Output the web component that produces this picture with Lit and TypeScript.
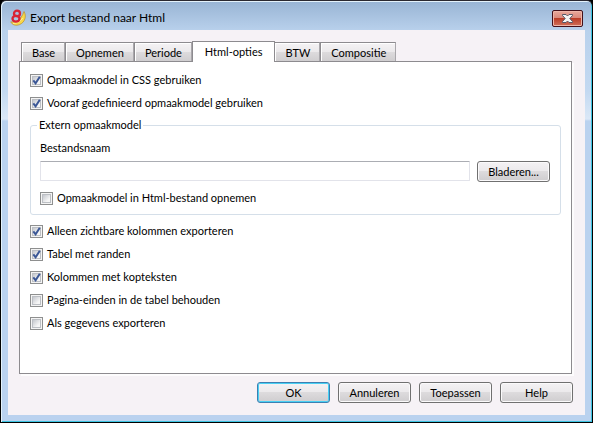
import { LitElement, html, css, svg, nothing } from "lit";
import { customElement, property, state } from "lit/decorators.js";
import { classMap } from "lit/directives/class-map.js";

const uiFont = css`Lato, "Noto Sans", sans-serif`;

@customElement("check-option")
class CheckOption extends LitElement {
  @property() label = "";
  @property({ type: Boolean }) checked = false;

  static styles = css`
    :host {
      display: block;
    }
    .row {
      display: flex;
      align-items: center;
      gap: 4px;
      height: 15px;
      line-height: 13px;
      white-space: nowrap;
    }
    .box {
      display: grid;
      width: 13px;
      height: 13px;
      flex: none;
    }
    .box > * {
      grid-area: 1 / 1;
    }
    input {
      appearance: none;
      margin: 0;
      width: 13px;
      height: 13px;
      box-sizing: border-box;
      border: 1px solid #8e8f8f;
      background: linear-gradient(135deg, #c4c7cd, #f6f6f6 75%) content-box, #f4f4f4;
      box-shadow: inset 0 0 0 1px #f4f4f4, inset 0 0 0 2px #bcbfc4;
      padding: 2px;
    }
    svg {
      width: 13px;
      height: 13px;
      pointer-events: none;
    }
    .text {
      padding-bottom: 2px;
    }
  `;

  render() {
    return html`<label class="row">
      <span class="box">
        <input
          type="checkbox"
          .checked=${this.checked}
          @change=${(e: Event) => (this.checked = (e.target as HTMLInputElement).checked)}
        />
        ${this.checked
          ? html`<svg viewBox="0 0 13 13" aria-hidden="true">
              ${svg`<path d="M3.3 6.3 L5.6 9.3 L9.8 2.8" fill="none" stroke="#3b5796" stroke-width="2" />`}
            </svg>`
          : nothing}
      </span>
      <span class="text">${this.label}</span>
    </label>`;
  }
}

@customElement("app-root")
class AppRoot extends LitElement {
  @state() private active = "Html-opties";

  private tabs = ["Base", "Opnemen", "Periode", "Html-opties", "BTW", "Compositie"];

  static styles = css`
    :host {
      display: block;
      background: #000;
      font: 11px/15px ${uiFont};
      color: #000;
    }
    * {
      box-sizing: border-box;
    }
    .window {
      display: flex;
      flex-direction: column;
      min-height: 100vh;
      padding: 0 7px 7px;
      border: 1px solid #000;
      border-top-color: #2a2830;
      border-radius: 6px 6px 0 0;
      background: linear-gradient(#98b4d4, #b9d1ec 30px, #c3d9f1 90px, #dbe8f7 118px, #bad2ef 120px, #bad2ef);
      box-shadow: inset 1px 1px 0 #e4f2fb, inset -1px -1px 0 #3cc4e2;
    }
    .titlebar {
      display: flex;
      align-items: center;
      gap: 4px;
      height: 29px;
      flex: none;
      padding: 5px 2px 0;
    }
    .logo {
      width: 16px;
      height: 18px;
      flex: none;
    }
    h1 {
      flex: 1;
      margin: 0;
      font: 12px/16px ${uiFont};
    }
    .close {
      display: grid;
      place-items: center;
      width: 31px;
      height: 17px;
      padding: 0;
      border: 1px solid #43101a;
      border-radius: 2px;
      background: linear-gradient(#e9a99c, #d9887b 48%, #bb3d27 50%, #d0705a);
      box-shadow: inset 0 0 0 1px #eeb6a9;
    }
    .close svg {
      width: 13px;
      height: 11px;
    }
    .client {
      display: flex;
      flex-direction: column;
      flex: 1;
      padding: 11px 12px 12px 11px;
      background: #f6f2f6;
    }
    .tabs {
      display: flex;
      align-items: flex-end;
      height: 21px;
      padding-left: 2px;
      margin-bottom: -1px;
      z-index: 1;
    }
    .tab {
      height: 19px;
      margin: 0 0 1px;
      padding: 0 9px 0 10px;
      border: 1px solid #8d8b8f;
      border-right-color: #a9a7ab;
      border-bottom-width: 0;
      background: linear-gradient(#f5f3f5, #ebe9eb 50%, #dddbdd 50%, #d0ced0);
      box-shadow: inset 1px 1px 0 #fff;
      font: inherit;
      line-height: 17px;
      color: inherit;
      white-space: nowrap;
    }
    .tab.active {
      height: 21px;
      margin: 0;
      padding: 0 12px 2px;
      border-right-color: #8d8b8f;
      background: #fff;
    }
    .tab.active + .tab {
      border-left-width: 0;
    }
    .panel {
      flex: 1;
      display: flex;
      flex-direction: column;
      gap: 8px;
      margin-right: 1px;
      padding: 11px 10px;
      border: 1px solid #8d8b8f;
      background: #fff;
      box-shadow: 2px 2px 0 #fdfcfd;
    }
    fieldset {
      margin: -1px 0 1px;
      padding: 8px 10px 8px 9px;
      border: 1px solid #d5dfe9;
      border-radius: 3px;
      min-width: 0;
    }
    legend {
      margin-left: -3px;
      padding: 0 2px 2px;
      line-height: 13px;
    }
    .caption {
      display: block;
      padding-bottom: 2px;
      line-height: 13px;
    }
    .file {
      display: flex;
      gap: 7px;
      margin: 5px 0 9px;
    }
    .file input {
      flex: 1;
      min-width: 0;
      height: 20px;
      padding: 0 4px;
      border: 1px solid #e2e3ea;
      border-top-color: #abadb3;
      border-radius: 1px;
      font: inherit;
      background: #fff;
    }
    .push {
      width: 73px;
      height: 21px;
      padding: 0;
      border: 1px solid #707070;
      border-radius: 3px;
      background: linear-gradient(#f4f2f4, #ebe9eb 50%, #dddbdd 50%, #cfcdcf);
      box-shadow: inset 0 0 0 1px #fbfafb;
      font: inherit;
      color: inherit;
    }
    .push.default {
      border-color: #3c7fb1;
      box-shadow: inset 0 0 0 1px #48d0f4;
    }
    .actions {
      display: flex;
      justify-content: flex-end;
      gap: 8px;
      margin-top: 8px;
    }
  `;

  render() {
    return html`<div class="window">
      <header class="titlebar">
        <svg class="logo" viewBox="0 0 16 18" aria-hidden="true">
          <path d="M14 2.5 C16.8 7 15 13.5 9.5 15.6 C6 17 2 16 0.8 12.8 C5 14 11 11.5 14 2.5Z" fill="#f8d848" stroke="#b98e2c" stroke-width=".7" />
          <path d="M12.6 9 C11 12 7 14.5 3 14.4" fill="none" stroke="#fff3a0" />
          <g fill="none" stroke="#d92335" stroke-width="2.3">
            <ellipse cx="7" cy="4.4" rx="3" ry="2.7" />
            <ellipse cx="6" cy="9.7" rx="3.5" ry="2.9" />
          </g>
        </svg>
        <h1>Export bestand naar Html</h1>
        <button class="close" aria-label="Sluiten">
          <svg viewBox="0 0 13 11" aria-hidden="true">
            <path
              d="M1.5 1.5 H5 L6.5 3 L8 1.5 H11.5 V2.5 L8.8 5.5 L11.5 8.5 V9.5 H8 L6.5 8 L5 9.5 H1.5 V8.5 L4.2 5.5 L1.5 2.5Z"
              fill="#f4f4f4"
              stroke="#555868"
            />
          </svg>
        </button>
      </header>
      <main class="client">
        <div class="tabs" role="tablist">
          ${this.tabs.map(
            (name) => html`<button
              role="tab"
              aria-selected=${name === this.active ? "true" : "false"}
              class=${classMap({ tab: true, active: name === this.active })}
              @click=${() => (this.active = name)}
            >${name}</button>`,
          )}
        </div>
        <section class="panel" role="tabpanel">
          <check-option label="Opmaakmodel in CSS gebruiken" checked></check-option>
          <check-option label="Vooraf gedefinieerd opmaakmodel gebruiken" checked></check-option>
          <fieldset>
            <legend>Extern opmaakmodel</legend>
            <label class="caption" for="file">Bestandsnaam</label>
            <div class="file">
              <input id="file" type="text" />
              <button class="push">Bladeren...</button>
            </div>
            <check-option label="Opmaakmodel in Html-bestand opnemen"></check-option>
          </fieldset>
          <check-option label="Alleen zichtbare kolommen exporteren" checked></check-option>
          <check-option label="Tabel met randen" checked></check-option>
          <check-option label="Kolommen met kopteksten" checked></check-option>
          <check-option label="Pagina-einden in de tabel behouden"></check-option>
          <check-option label="Als gegevens exporteren"></check-option>
        </section>
        <footer class="actions">
          <button class="push default">OK</button>
          <button class="push">Annuleren</button>
          <button class="push">Toepassen</button>
          <button class="push">Help</button>
        </footer>
      </main>
    </div>`;
  }
}
